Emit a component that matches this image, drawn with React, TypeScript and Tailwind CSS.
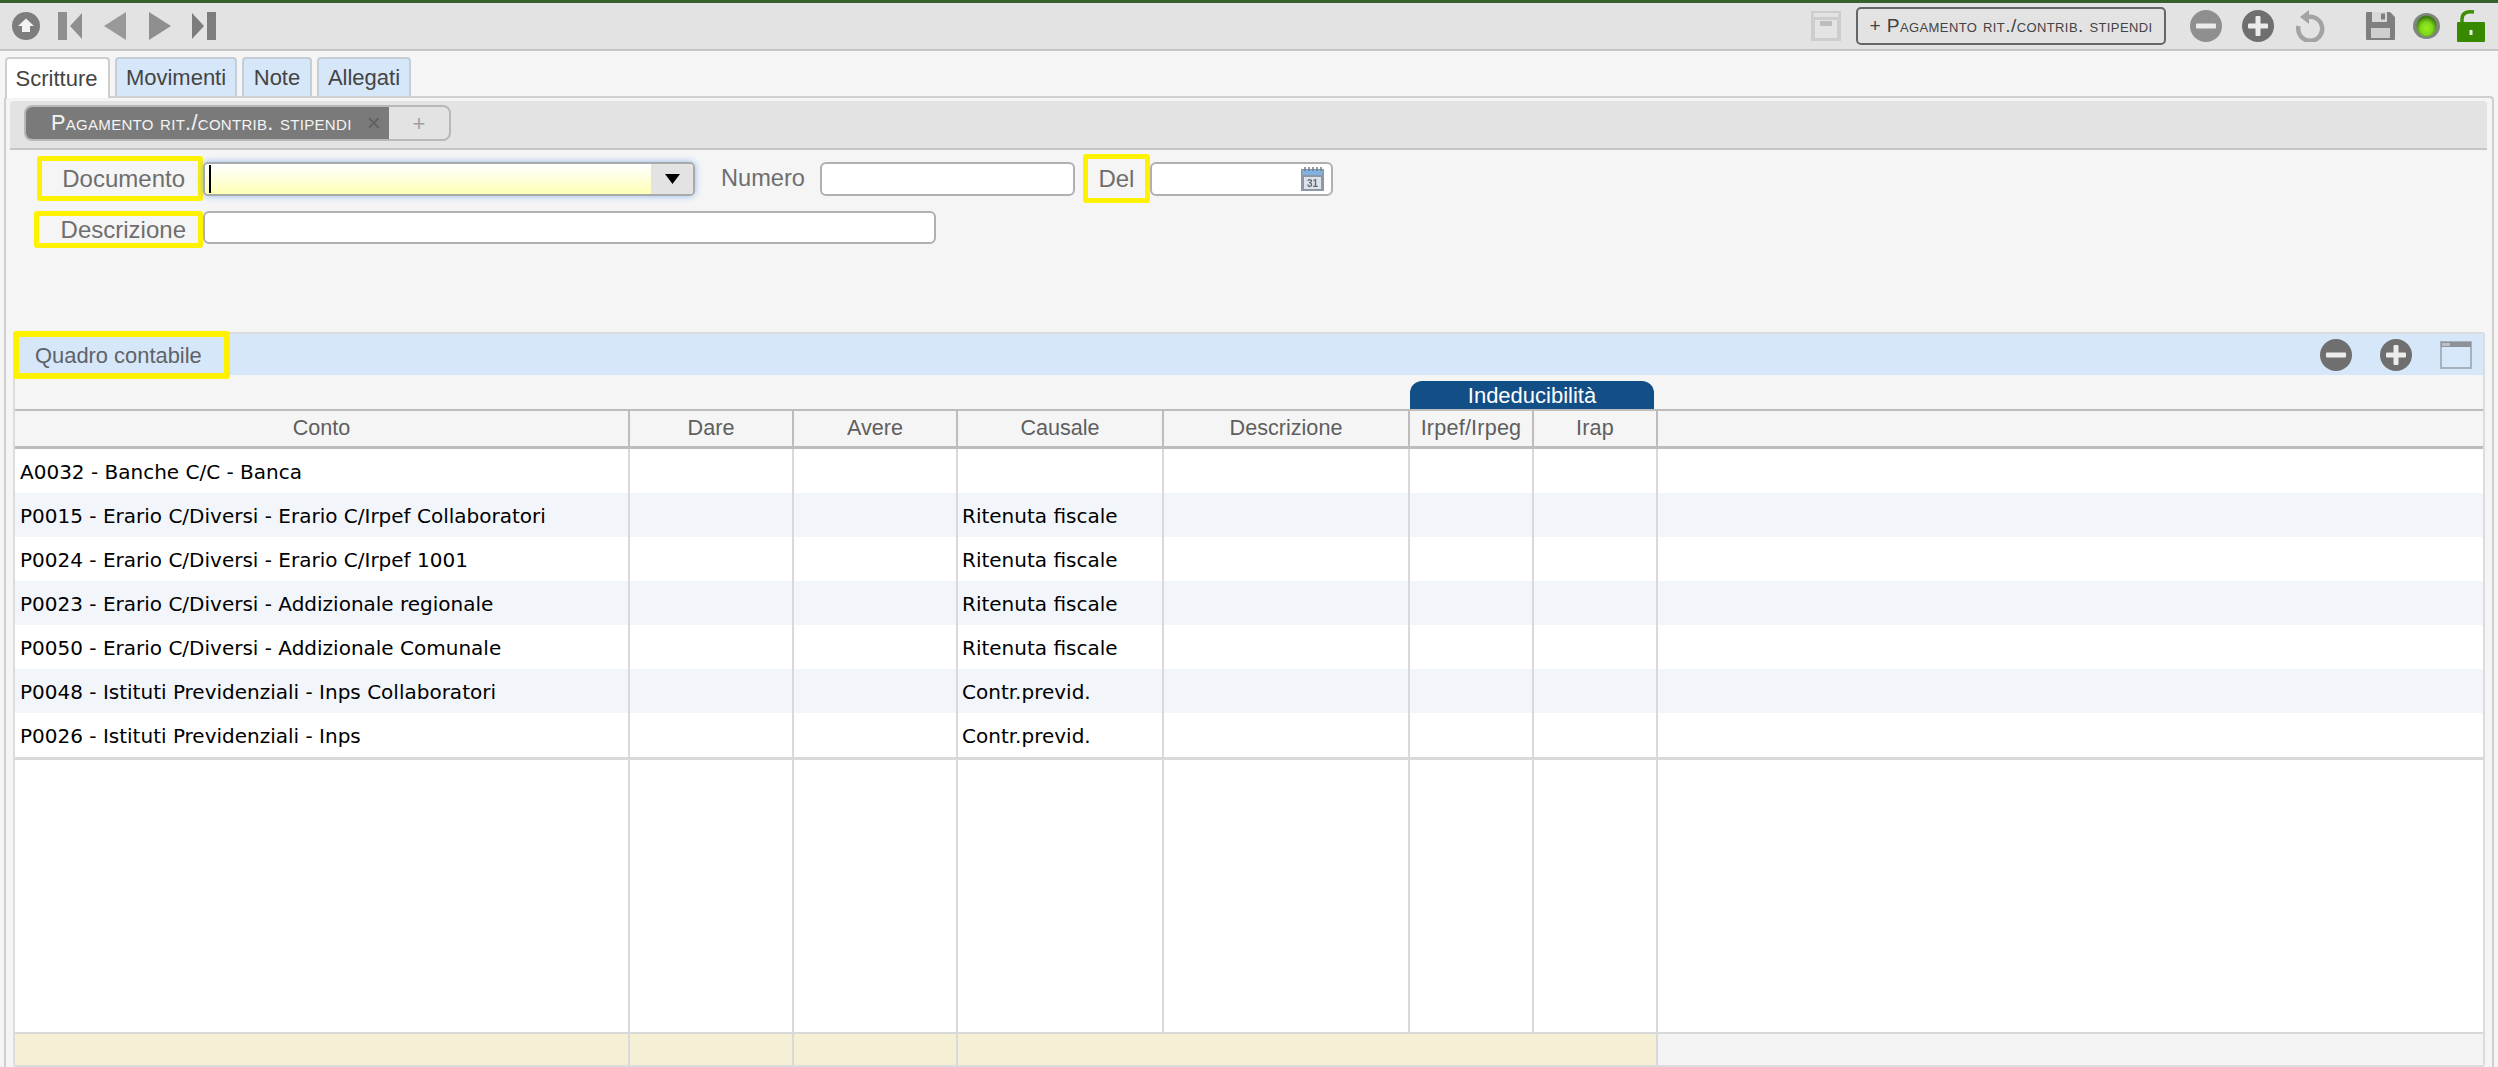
import React from "react";

const sans = "[font-family:'Liberation_Sans',Arial,sans-serif]";
const grid = "grid grid-cols-[615px_164px_164px_206px_246px_124px_124px_1fr]";

function UpIcon() {
  return (
    <svg width="28" height="28" viewBox="0 0 28 28" className="blur-[0.5px]">
      <circle cx="14" cy="14" r="14" fill="#7d7d7d" />
      <path d="M14 6.5 L22 14 L18 14 L18 20 L10 20 L10 14 L6 14 Z" fill="#f2f2f2" />
    </svg>
  );
}
function FirstIcon() {
  return (
    <svg width="25" height="28" viewBox="0 0 25 28" className="blur-[0.5px]">
      <rect x="0" y="0" width="9" height="28" fill="#8f8f8f" />
      <path d="M24 1 L12 14 L24 27 Z" fill="#8f8f8f" />
    </svg>
  );
}
function PrevIcon() {
  return (
    <svg width="22" height="28" viewBox="0 0 22 28" className="blur-[0.5px]">
      <path d="M22 0 L0 14 L22 28 Z" fill="#999999" />
    </svg>
  );
}
function NextIcon() {
  return (
    <svg width="22" height="28" viewBox="0 0 22 28" className="blur-[0.5px]">
      <path d="M0 0 L22 14 L0 28 Z" fill="#8f8f8f" />
    </svg>
  );
}
function LastIcon() {
  return (
    <svg width="25" height="28" viewBox="0 0 25 28" className="blur-[0.5px]">
      <rect x="16" y="0" width="9" height="28" fill="#7d7d7d" />
      <path d="M1 1 L13 14 L1 27 Z" fill="#7d7d7d" />
    </svg>
  );
}
function RoundIcon({ plus, color }: { plus?: boolean; color: string }) {
  return (
    <svg width="32" height="32" viewBox="0 0 32 32" className="blur-[0.5px]">
      <circle cx="16" cy="16" r="16" fill={color} />
      <rect x="6" y="13.5" width="20" height="5" rx="1" fill="#ececec" />
      {plus && <rect x="13.5" y="6" width="5" height="20" rx="1" fill="#ececec" />}
    </svg>
  );
}
function ArchiveIcon() {
  return (
    <svg width="30" height="30" viewBox="0 0 30 30" className="blur-[0.5px]">
      <rect x="0" y="0" width="30" height="30" fill="#cdcdcd" />
      <rect x="2.5" y="2" width="25" height="4" fill="#e2e2e2" />
      <rect x="4" y="9" width="22" height="18" fill="#e4e4e4" />
      <rect x="9" y="10" width="12" height="5" fill="#bdbdbd" />
    </svg>
  );
}
function RefreshIcon() {
  return (
    <svg width="30" height="32" viewBox="0 0 30 32" className="blur-[0.5px]">
      <path d="M11 7.5 A12 12 0 1 1 3.5 16" fill="none" stroke="#a3a3a3" strokeWidth="4.5" />
      <path d="M14 0 L14 14 L5 7 Z" fill="#a3a3a3" />
    </svg>
  );
}
function SaveIcon() {
  return (
    <svg width="29" height="28" viewBox="0 0 29 28" className="blur-[0.5px]">
      <path d="M0 1 Q0 0 1 0 L24 0 L29 5 L29 27 Q29 28 28 28 L1 28 Q0 28 0 27 Z" fill="#7f7f7f" />
      <rect x="6" y="0" width="15" height="10" fill="#d8d8d8" />
      <rect x="15" y="1.5" width="4" height="6" fill="#7f7f7f" />
      <rect x="5" y="16" width="19" height="10" fill="#cfcfcf" />
    </svg>
  );
}
function LedIcon() {
  return (
    <svg width="27" height="26" viewBox="0 0 27 26" className="blur-[0.5px]">
      <defs>
        <radialGradient id="led" cx="50%" cy="62%" r="55%">
          <stop offset="0%" stopColor="#94f01e" />
          <stop offset="55%" stopColor="#7fd61a" />
          <stop offset="100%" stopColor="#3d7c12" />
        </radialGradient>
      </defs>
      <ellipse cx="13.5" cy="13" rx="13.5" ry="13" fill="#7f867d" />
      <ellipse cx="13.5" cy="13" rx="10" ry="10.5" fill="url(#led)" />
    </svg>
  );
}
function LockIcon() {
  return (
    <svg width="28" height="32" viewBox="0 0 28 32" className="blur-[0.3px]">
      <path d="M5 13 L5 9 C5 3 10 1 17 2" fill="none" stroke="#3f8f05" strokeWidth="3.5" />
      <rect x="0" y="12" width="28" height="20" rx="1" fill="#378a00" />
      <rect x="12.5" y="20" width="3" height="5" fill="#e6efe0" />
    </svg>
  );
}
function WindowIcon() {
  return (
    <svg width="32" height="28" viewBox="0 0 32 28" className="blur-[0.3px]">
      <rect x="1" y="1" width="30" height="26" fill="#d7e8fa" stroke="#a8b2bd" strokeWidth="2" />
      <rect x="1" y="1" width="30" height="5" fill="#8d9299" />
      <rect x="2" y="2" width="8" height="3" fill="#b9c0c8" />
    </svg>
  );
}
function CalendarIcon() {
  return (
    <svg width="23" height="24" viewBox="0 0 23 24" className="blur-[0.3px]">
      <rect x="0" y="2" width="23" height="22" fill="#8a98a8" />
      <rect x="1.5" y="3" width="20" height="5" fill="#7fb2e0" />
      <rect x="3" y="10" width="17" height="12" fill="#dfe3e8" />
      <path d="M4 0 v4 M8 0 v4 M12 0 v4 M16 0 v4 M20 0 v4" stroke="#6d7c8c" strokeWidth="1.5" />
      <text x="11.5" y="20" textAnchor="middle" fontSize="10" fontWeight="700" fill="#5c6b7a" fontFamily="Liberation Sans">31</text>
    </svg>
  );
}

function Tab({ label, active, w }: { label: string; active?: boolean; w: string }) {
  return (
    <div
      className={`${w} h-[39px] flex items-center justify-center rounded-t-[4px] border-2 border-b-0 text-[22px] text-[#444] ${
        active ? "bg-white border-[#cfcfcf] h-[41px] -mb-[2px] relative z-10 pr-[2px] text-[#333]" : "bg-[#d6e7f9] border-[#c5cdd6]"
      }`}
    >
      {label}
    </div>
  );
}

function Label({ text, cls }: { text: string; cls: string }) {
  return (
    <div className={`flex items-center shrink-0 border-[5px] border-[#fff200] rounded-[3px] text-[24px] text-[#6e6e6e] ${cls}`}>
      {text}
    </div>
  );
}

const head = ["Conto", "Dare", "Avere", "Causale", "Descrizione", "Irpef/Irpeg", "Irap"];
const rows: [string, string][] = [
  ["A0032 - Banche C/C - Banca", ""],
  ["P0015 - Erario C/Diversi - Erario C/Irpef Collaboratori", "Ritenuta fiscale"],
  ["P0024 - Erario C/Diversi - Erario C/Irpef 1001", "Ritenuta fiscale"],
  ["P0023 - Erario C/Diversi - Addizionale regionale", "Ritenuta fiscale"],
  ["P0050 - Erario C/Diversi - Addizionale Comunale", "Ritenuta fiscale"],
  ["P0048 - Istituti Previdenziali - Inps Collaboratori", "Contr.previd."],
  ["P0026 - Istituti Previdenziali - Inps", "Contr.previd."],
];
const rowFont = "[font-family:'DejaVu_Sans',sans-serif] text-[20px] text-black";
const line = "border-r-2 border-[#d9d9d9]";

export default function App() {
  return (
    <div className={`${sans} w-full h-[1067px] overflow-hidden bg-[#f5f5f5] flex flex-col`}>
      {/* top toolbar */}
      <div className="h-[51px] shrink-0 border-t-[3px] border-t-[#34622a] border-b-2 border-b-[#c6c6c6] bg-[#e3e3e3] flex items-center pl-[12px] pr-[13px]">
        <UpIcon />
        <div className="ml-[18px] flex items-center"><FirstIcon /></div>
        <div className="ml-[21px] flex items-center"><PrevIcon /></div>
        <div className="ml-[23px] flex items-center"><NextIcon /></div>
        <div className="ml-[20px] flex items-center"><LastIcon /></div>
        <div className="ml-auto flex items-center"><ArchiveIcon /></div>
        <div className="ml-[15px] w-[310px] h-[38px] rounded-[5px] border-2 border-[#666] flex items-center justify-center text-[19.2px] tracking-[0.4px] text-[#444] [font-variant-caps:small-caps] whitespace-nowrap">
          + Pagamento rit./contrib. stipendi
        </div>
        <div className="ml-[24px] flex items-center"><RoundIcon color="#8f8f8f" /></div>
        <div className="ml-[20px] flex items-center"><RoundIcon plus color="#6f6f6f" /></div>
        <div className="ml-[21px] flex items-center"><RefreshIcon /></div>
        <div className="ml-[41px] flex items-center"><SaveIcon /></div>
        <div className="ml-[18px] flex items-center"><LedIcon /></div>
        <div className="ml-[17px] flex items-center"><LockIcon /></div>
      </div>

      {/* tabs */}
      <div className="shrink-0 flex pl-[5px] pt-[6px] gap-[5px]">
        <Tab label="Scritture" active w="w-[105px]" />
        <Tab label="Movimenti" w="w-[122px]" />
        <Tab label="Note" w="w-[70px]" />
        <Tab label="Allegati" w="w-[94px]" />
      </div>

      {/* content */}
      <div className="flex-1 min-h-0 ml-[4px] mr-[4px] border-2 border-b-0 border-[#cfcfcf] rounded-t-[4px] pt-[3px] flex flex-col">
        {/* sub tabs */}
        <div className="shrink-0 ml-[4px] mr-[5px] h-[49px] bg-[#e3e3e3] border-b-2 border-[#c6c6c6] rounded-t-[4px] pl-[14px] pt-[4px]">
          <div className="flex w-[427px] h-[36px] rounded-[8px] border-2 border-[#b8b8b8] overflow-hidden">
            <div className="w-[363px] bg-[#7a7a7a] flex items-center pl-[25px] pr-[8px] text-[#f4f4f4] text-[21.7px] tracking-[0.3px] [font-variant-caps:small-caps] whitespace-nowrap">
              <span>Pagamento rit./contrib. stipendi</span>
              <span className="ml-auto text-[#5f5f5f] text-[24px] leading-none">×</span>
            </div>
            <div className="flex-1 flex items-center justify-center text-[#a0a0a0] text-[22px]">+</div>
          </div>
        </div>

        {/* form */}
        <div className="shrink-0 flex items-center pl-[31px] mt-[4px] h-[49px]">
          <Label text="Documento" cls="w-[166px] h-[45px] justify-end pr-[13px]" />
          <div className="relative w-[492px] h-[34px] rounded-[5px] border-2 border-[#a9a9a9] shadow-[0_0_7px_#8fb8ea] flex overflow-hidden shrink-0">
            <div className="flex-1 bg-gradient-to-b from-white to-[#ffffb4] pl-[4px] py-[1px]">
              <div className="w-[2px] h-full bg-black" />
            </div>
            <div className="w-[42px] bg-[#e3e3e3] flex items-center justify-center">
              <svg width="15" height="10" viewBox="0 0 15 10"><path d="M0 0 H15 L7.5 10 Z" fill="#000" /></svg>
            </div>
          </div>
          <span className="ml-[26px] text-[23.6px] text-[#6e6e6e]">Numero</span>
          <div className="ml-[15px] w-[255px] h-[34px] bg-white rounded-[6px] border-2 border-[#b0b0b0]" />
          <Label text="Del" cls="ml-[8px] w-[67px] h-[49px] justify-center" />
          <div className="w-[183px] h-[34px] bg-white rounded-[6px] border-2 border-[#b0b0b0] flex items-center justify-end pr-[7px]">
            <CalendarIcon />
          </div>
        </div>
        <div className="shrink-0 flex items-start pl-[28px] mt-[8px]">
          <Label text="Descrizione" cls="w-[169px] h-[37px] justify-end pr-[12px]" />
          <div className="w-[733px] h-[33px] bg-white rounded-[6px] border-2 border-[#b0b0b0]" />
        </div>

        {/* quadro contabile */}
        <div className="flex-1 min-h-0 mt-[84px] ml-[7px] mr-[7px] border-2 border-[#dcdcdc] rounded-[3px] flex flex-col">
          <div className="shrink-0 h-[41px] bg-[#d6e7f9] flex items-center">
            <div className="-ml-[2px] w-[217px] h-[48px] shrink-0 border-[6px] border-[#fff200] rounded-[3px] flex items-center pl-[16px] pt-[3px] text-[21.9px] text-[#5f6368]">
              Quadro contabile
            </div>
            <div className="ml-auto flex items-center gap-[28px] pr-[11px]">
              <RoundIcon color="#6f6f6f" />
              <RoundIcon plus color="#6f6f6f" />
              <WindowIcon />
            </div>
          </div>

          <div className={`${grid} shrink-0 pt-[6px]`}>
            <div className="col-start-6 col-span-2 mr-[4px] h-[28px] pt-[1px] rounded-t-[12px] bg-[#134f87] text-white text-[22px] flex items-center justify-center">
              Indeducibilità
            </div>
          </div>

          {/* table header */}
          <div className={`${grid} shrink-0 h-[40px] border-y-2 border-b-[3px] border-[#bdbdbd]`}>
            {head.map((h, i) => (
              <div key={h} className={`flex items-center justify-center text-[21.6px] text-[#5f5f5f] whitespace-nowrap border-r-2 border-[#bdbdbd] ${i >= 5 ? "tracking-[0.2px]" : ""}`}>
                {h}
              </div>
            ))}
            <div />
          </div>

          {/* rows */}
          {rows.map(([a, c], i) => (
            <div key={a} className={`${grid} shrink-0 h-[44px] ${i % 2 === 1 ? "bg-[#f2f5fa]" : "bg-white"} ${rowFont}`}>
              <div className={`${line} flex items-center pl-[5px] pt-[2px] whitespace-nowrap`}>{a}</div>
              <div className={line} />
              <div className={line} />
              <div className={`${line} flex items-center pl-[4px] pt-[2px] whitespace-nowrap`}>{c}</div>
              <div className={line} />
              <div className={line} />
              <div className={line} />
              <div />
            </div>
          ))}

          {/* empty area */}
          <div className={`${grid} flex-1 min-h-0 bg-white border-t-[3px] border-[#d9d9d9]`}>
            <div className={line} /><div className={line} /><div className={line} /><div className={line} />
            <div className={line} /><div className={line} /><div className={line} /><div />
          </div>

          {/* totals */}
          <div className="grid grid-cols-[615px_164px_164px_700px_1fr] shrink-0 h-[33px] border-t-2 border-[#d9d9d9]">
            <div className={`bg-[#f5efd5] ${line}`} />
            <div className={`bg-[#f5efd5] ${line}`} />
            <div className={`bg-[#f5efd5] ${line}`} />
            <div className={`bg-[#f5efd5] ${line}`} />
            <div className="bg-[#f4f4f4]" />
          </div>
        </div>
      </div>
    </div>
  );
}
